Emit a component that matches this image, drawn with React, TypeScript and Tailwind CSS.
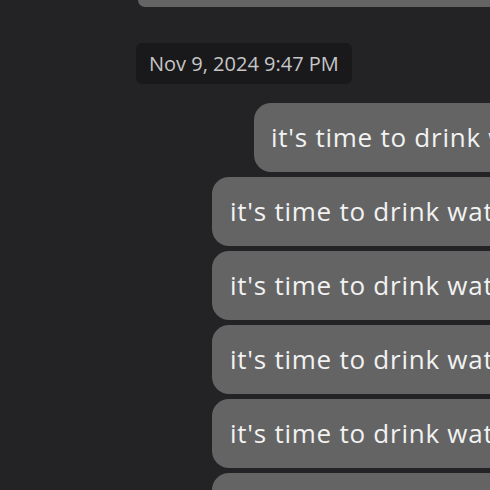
const messages = [
  "it's time to drink water",
  "it's time to drink water",
  "it's time to drink water",
  "it's time to drink water",
  "it's time to drink water",
  "it's time to drink water",
];

export default function App() {
  return (
    <div className="w-[490px] h-[490px] overflow-hidden bg-[#232325] font-['Open_Sans',sans-serif] [font-variant-ligatures:none]">
      <div className="w-[620px]">
        <div className="ml-[138px] h-[7px] rounded-bl-[18px] bg-[#646464]" />
        <div className="mt-[36px] ml-[136px] flex">
          <div className="h-[41px] px-[13px] flex items-center rounded-md bg-[#19191b] text-[20px] text-[#c6c6c6]">
            Nov 9, 2024 9:47 PM
          </div>
        </div>
        <div className="mt-[19px] flex flex-col gap-[5px]">
          <div className="ml-[254px] h-[69px] pl-[17px] flex items-center rounded-[17px] bg-[#646464] text-[26px] tracking-[0.75px] text-[#f2f2f2] whitespace-nowrap">
            it's time to drink water!
          </div>
          {messages.map((m, i) => (
            <div
              key={i}
              className="ml-[212px] h-[69px] pl-[18px] flex items-center rounded-[17px] bg-[#646464] text-[26px] tracking-[0.75px] text-[#f2f2f2] whitespace-nowrap"
            >
              {m}
            </div>
          ))}
        </div>
      </div>
    </div>
  );
}
